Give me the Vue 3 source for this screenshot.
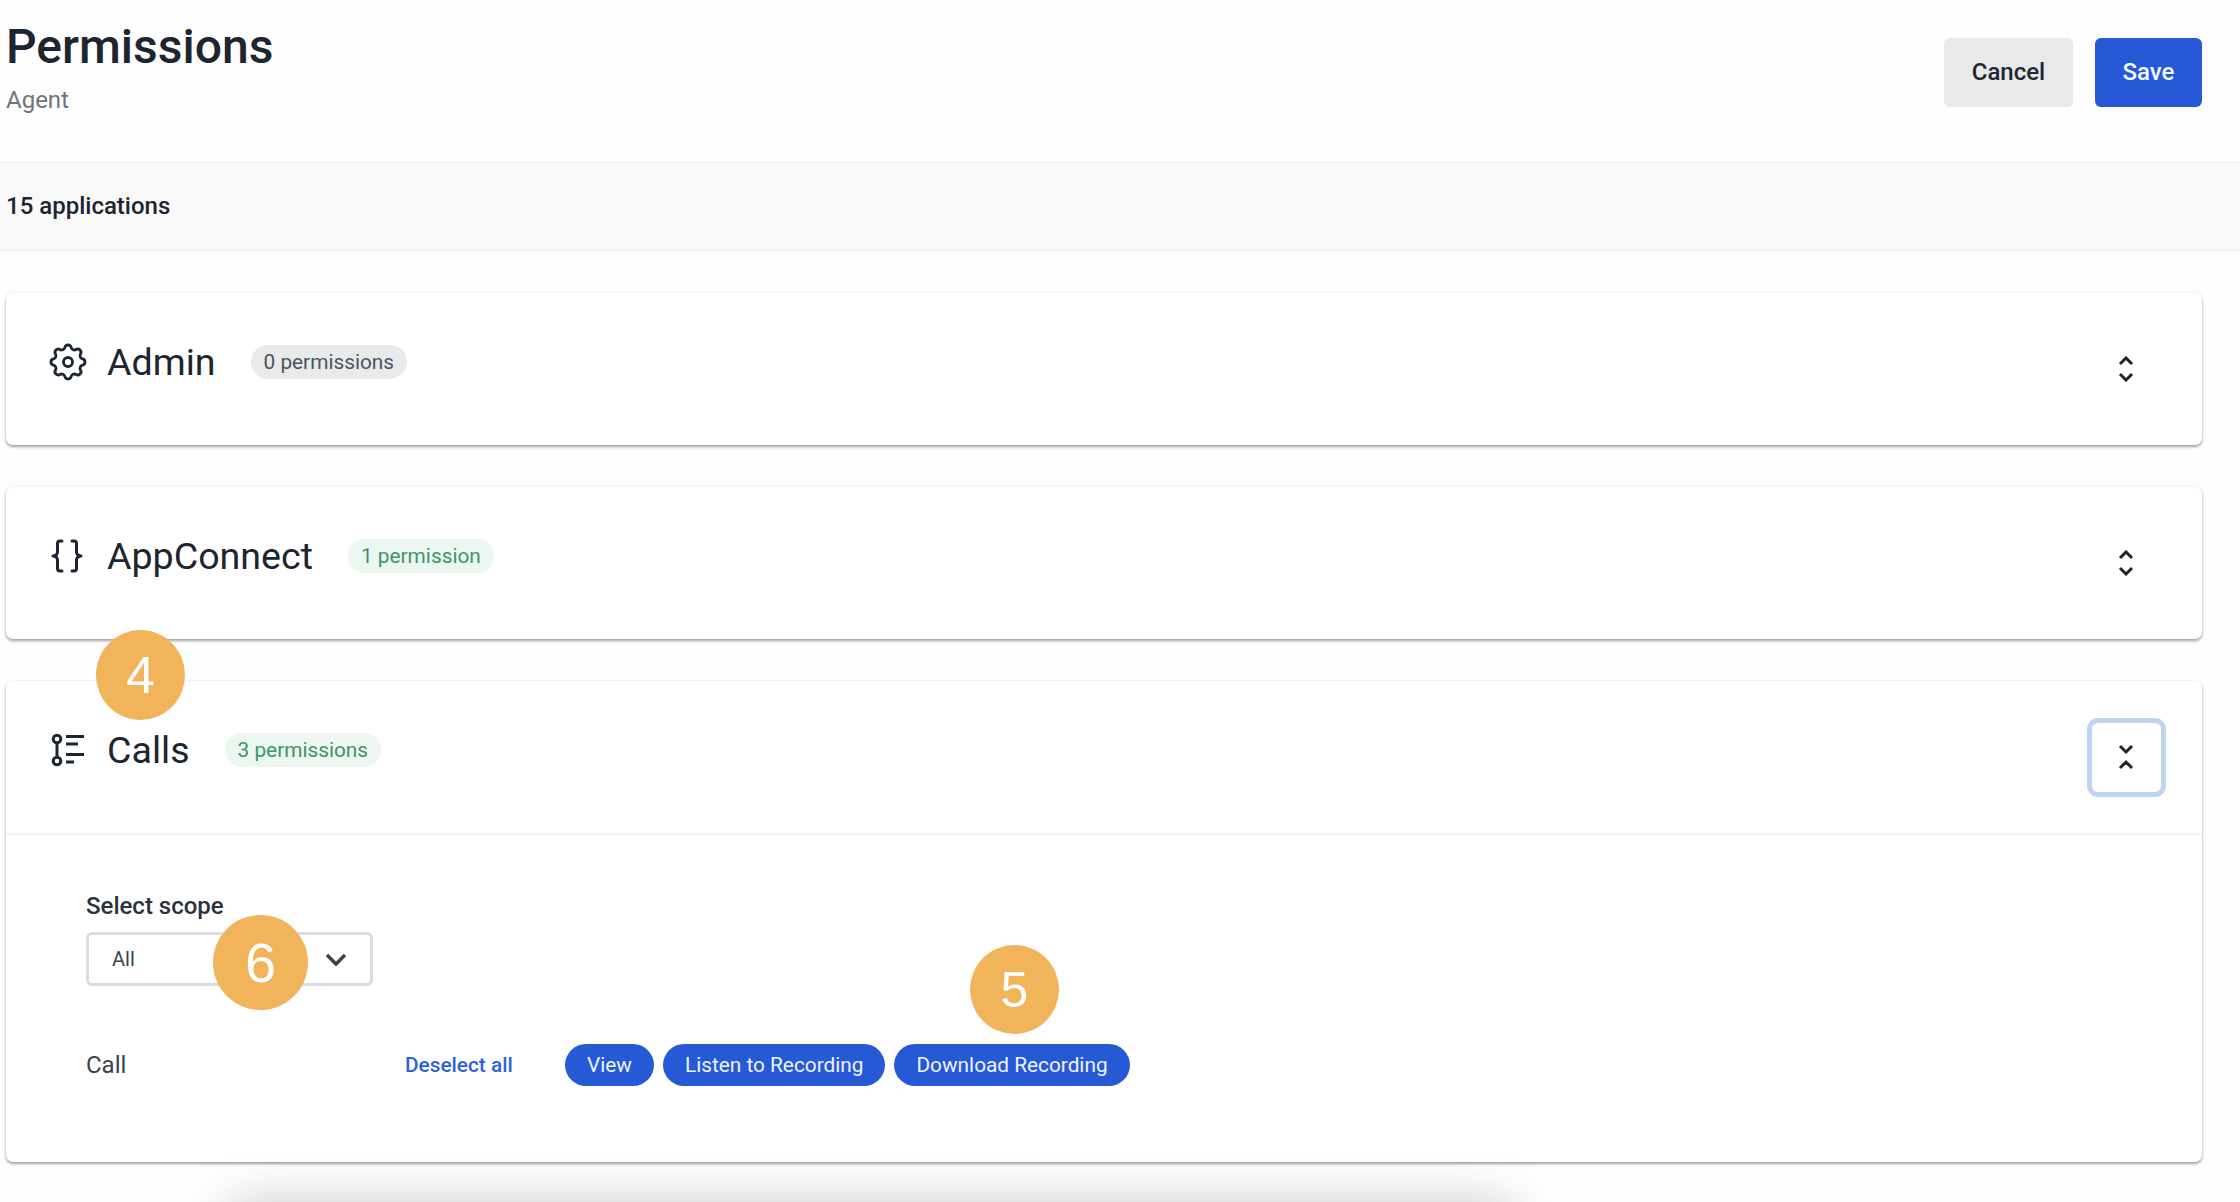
<script setup>
const actions = ['View', 'Listen to Recording', 'Download Recording']
</script>

<template>
  <div class="page">
    <header class="top">
      <div>
        <h1 class="title">Permissions</h1>
        <p class="role">Agent</p>
      </div>
      <div class="top-actions">
        <button class="btn cancel">Cancel</button>
        <button class="btn save">Save</button>
      </div>
    </header>

    <div class="count-bar">15 applications</div>

    <main class="cards">
      <section class="card">
        <div class="card-head">
          <div class="head-left">
            <svg class="app-icon" viewBox="3 3 18 18" fill="none" stroke="currentColor" stroke-width="1.5" stroke-linejoin="round">
              <path d="M10.325 4.317c.426-1.756 2.924-1.756 3.35 0a1.724 1.724 0 002.573 1.066c1.543-.94 3.31.826 2.37 2.37a1.724 1.724 0 001.065 2.572c1.756.426 1.756 2.924 0 3.35a1.724 1.724 0 00-1.066 2.573c.94 1.543-.826 3.31-2.37 2.37a1.724 1.724 0 00-2.572 1.065c-.426 1.756-2.924 1.756-3.35 0a1.724 1.724 0 00-2.573-1.066c-1.543.94-3.31-.826-2.37-2.37a1.724 1.724 0 00-1.065-2.572c-1.756-.426-1.756-2.924 0-3.35a1.724 1.724 0 001.066-2.573c-.94-1.543.826-3.31 2.37-2.37.996.608 2.296.07 2.572-1.065z"/>
              <circle cx="12" cy="12" r="2.400"/>
            </svg>
            <span class="app-name">Admin</span>
            <span class="chip chip-gray">0 permissions</span>
          </div>
          <span class="toggle">
            <svg width="16" height="26" viewBox="0 0 16 26" fill="none" stroke="currentColor" stroke-width="3"><path d="M2 8l6-6 6 6M2 18l6 6 6-6"/></svg>
          </span>
        </div>
      </section>

      <section class="card">
        <div class="card-head">
          <div class="head-left">
            <svg class="app-icon" viewBox="0 0 34 34" fill="none" stroke="currentColor" stroke-width="3" stroke-linecap="round" stroke-linejoin="round">
              <path d="M11 2H9C7.500 2 6.500 3 6.500 4.500V13c0 2-1.500 3.500-4.500 4 3 .5 4.500 2 4.500 4v8.500C6.500 31 7.500 32 9 32h2"/>
              <path d="M21 2h2c1.500 0 2.500 1 2.500 2.500V13c0 2 1.500 3.500 4.500 4-3 .5-4.500 2-4.500 4v8.500c0 1.500-1 2.500-2.500 2.500h-2"/>
            </svg>
            <span class="app-name">AppConnect</span>
            <span class="chip chip-green">1 permission</span>
          </div>
          <span class="toggle">
            <svg width="16" height="26" viewBox="0 0 16 26" fill="none" stroke="currentColor" stroke-width="3"><path d="M2 8l6-6 6 6M2 18l6 6 6-6"/></svg>
          </span>
        </div>
      </section>

      <section class="card">
        <div class="card-head card-head-open">
          <div class="head-left">
            <svg class="app-icon" viewBox="0 0 34 34" fill="none" stroke="currentColor" stroke-width="3" stroke-linecap="butt">
              <circle cx="6" cy="6" r="3.800"/>
              <circle cx="6" cy="28" r="3.800"/>
              <path d="M6 10v14"/>
              <path d="M15 3.500h18M15 11h12M15 21.500h18M15 29h8"/>
            </svg>
            <span class="app-name">Calls</span>
            <span class="chip chip-green">3 permissions</span>
          </div>
          <span class="toggle toggle-focus">
            <svg width="16" height="26" viewBox="0 0 16 26" fill="none" stroke="currentColor" stroke-width="3"><path d="M2 2l6 6 6-6M2 24l6-6 6 6"/></svg>
          </span>
        </div>
        <div class="card-body">
          <label class="field-label">Select scope</label>
          <div class="select">
            <span>All</span>
            <svg width="22" height="15" viewBox="0 0 22 15" fill="none" stroke="currentColor" stroke-width="3.400"><path d="M2 3l9 9 9-9"/></svg>
          </div>
          <div class="perm-row">
            <span class="perm-name">Call</span>
            <a class="deselect">Deselect all</a>
            <div class="perm-actions">
              <button v-for="a in actions" :key="a" class="pill">{{ a }}</button>
            </div>
          </div>
        </div>
      </section>
    </main>

    <div class="bottom-glow"></div>

    <span class="marker marker-4">4</span>
    <span class="marker marker-6">6</span>
    <span class="marker marker-5">5</span>
  </div>
</template>

<style>
html, body { margin: 0; background: #fefefe; }
</style>

<style scoped>
.page {
  position: relative;
  width: 2240px;
  height: 1202px;
  overflow: hidden;
  background: #fefefe;
  color: #1c2530;
  font-family: Roboto, "Liberation Sans", sans-serif;
}
.top {
  height: 162px;
  box-sizing: border-box;
  padding: 18px 38px 0 6px;
  display: flex;
  justify-content: space-between;
}
.title {
  margin: 0;
  font-size: 48px;
  line-height: 58px;
  font-weight: 500;
}
.role {
  margin: 9px 0 0;
  font-size: 24px;
  line-height: 30px;
  color: #6f747b;
}
.top-actions {
  display: flex;
  gap: 22px;
  padding-top: 20px;
}
.btn {
  height: 69px;
  border: 0;
  border-radius: 6px;
  padding: 0 0 2px;
  font: 500 24px Roboto, sans-serif;
}
.cancel { width: 129px; background: #e8e9eb; color: #1f2731; }
.save { width: 107px; background: #2559d6; color: #f5f8ff; }
.count-bar {
  height: 89px;
  box-sizing: border-box;
  padding: 0 0 2px 6px;
  background: #f9f9f9;
  border-top: 1px solid #ebebeb;
  border-bottom: 1px solid #ebebeb;
  display: flex;
  align-items: center;
  font-size: 24px;
  font-weight: 500;
}
.cards {
  width: 2196px;
  margin-left: 6px;
  padding-top: 42px;
  display: flex;
  flex-direction: column;
  gap: 42px;
}
.card {
  background: #fff;
  border-radius: 7px;
  box-shadow: 0 2px 3px rgba(0, 0, 0, .36), 0 0 4px rgba(0, 0, 0, .06);
}
.card-head {
  height: 152px;
  box-sizing: border-box;
  padding: 0 36px 0 45px;
  display: flex;
  justify-content: space-between;
  align-items: center;
}
.card-head-open {
  height: 154px;
  border-bottom: 2px solid #f3f3f3;
}
.head-left {
  display: flex;
  align-items: center;
  padding-bottom: 14px;
}
.app-icon {
  width: 34px;
  height: 34px;
  margin-right: 22px;
  flex: none;
  overflow: visible;
}
.app-name {
  font-size: 37.600px;
  line-height: 44px;
  margin-right: 35px;
}
.chip {
  height: 34px;
  box-sizing: border-box;
  padding: 0 13px;
  border-radius: 17px;
  display: flex;
  align-items: center;
  font-size: 20.800px;
}
.chip-gray { background: #e9eaec; color: #4b5563; }
.chip-green { background: #edf7f2; color: #3f9465; }
.toggle {
  width: 79px;
  height: 79px;
  box-sizing: border-box;
  display: flex;
  align-items: center;
  justify-content: center;
}
.toggle svg { margin-left: -2px; }
.toggle-focus {
  border: 5px solid #c0d3f0;
  border-radius: 11px;
}
.card-body {
  padding: 57px 0 76px 80px;
}
.field-label {
  display: block;
  font-size: 24px;
  line-height: 28px;
  font-weight: 500;
  color: #2a323d;
}
.select {
  width: 287px;
  height: 54px;
  margin-top: 12px;
  box-sizing: border-box;
  padding: 0 23px;
  border: 3px solid #d9dde3;
  border-radius: 6px;
  display: flex;
  justify-content: space-between;
  align-items: center;
  font-size: 20px;
  color: #3a424e;
}
.perm-row {
  margin-top: 58px;
  display: flex;
  align-items: center;
}
.perm-name {
  width: 319px;
  font-size: 24px;
  color: #3b424c;
}
.deselect {
  width: 160px;
  font-size: 20.800px;
  font-weight: 500;
  color: #2f62d9;
}
.perm-actions { display: flex; gap: 9px; }
.pill {
  height: 42px;
  padding: 0 22px;
  border: 0;
  border-radius: 21px;
  background: #2559d6;
  color: #eef3ff;
  font: 400 20.800px Roboto, sans-serif;
}
.bottom-glow {
  position: absolute;
  left: 230px;
  width: 1280px;
  top: 1208px;
  height: 44px;
  background: rgba(0, 0, 0, .26);
  filter: blur(26px);
}
.marker {
  position: absolute;
  display: flex;
  align-items: center;
  justify-content: center;
  border-radius: 50%;
  background: #f1b45b;
  color: #fff;
  font-family: "Liberation Sans", Arial, sans-serif;
}
.marker-4 { left: 96px; top: 630px; width: 89px; height: 90px; font-size: 52px; }
.marker-6 { left: 213px; top: 915px; width: 95px; height: 95px; font-size: 56px; }
.marker-5 { left: 970px; top: 945px; width: 89px; height: 89px; font-size: 50px; }
</style>
